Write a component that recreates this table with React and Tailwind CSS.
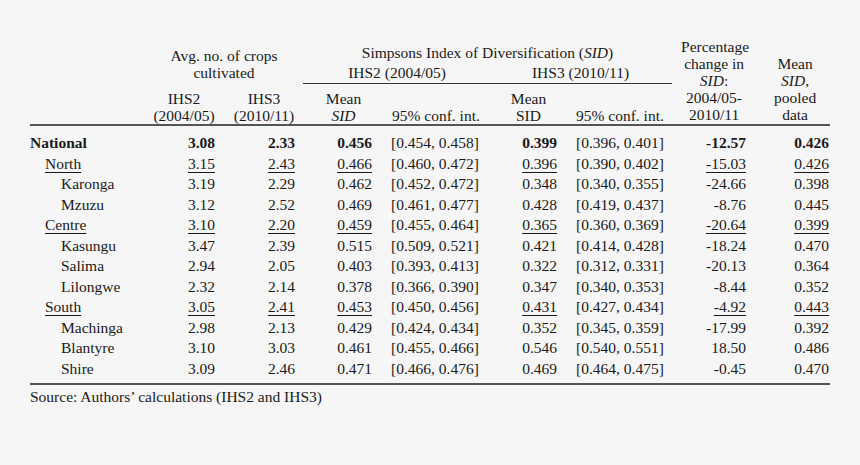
import React from 'react';

const rows = [
  { name: 'National', level: 0, bold: true, v: ['3.08', '2.33', '0.456', '[0.454, 0.458]', '0.399', '[0.396, 0.401]', '-12.57', '0.426'] },
  { name: 'North', level: 1, ul: true, v: ['3.15', '2.43', '0.466', '[0.460, 0.472]', '0.396', '[0.390, 0.402]', '-15.03', '0.426'] },
  { name: 'Karonga', level: 2, v: ['3.19', '2.29', '0.462', '[0.452, 0.472]', '0.348', '[0.340, 0.355]', '-24.66', '0.398'] },
  { name: 'Mzuzu', level: 2, v: ['3.12', '2.52', '0.469', '[0.461, 0.477]', '0.428', '[0.419, 0.437]', '-8.76', '0.445'] },
  { name: 'Centre', level: 1, ul: true, v: ['3.10', '2.20', '0.459', '[0.455, 0.464]', '0.365', '[0.360, 0.369]', '-20.64', '0.399'] },
  { name: 'Kasungu', level: 2, v: ['3.47', '2.39', '0.515', '[0.509, 0.521]', '0.421', '[0.414, 0.428]', '-18.24', '0.470'] },
  { name: 'Salima', level: 2, v: ['2.94', '2.05', '0.403', '[0.393, 0.413]', '0.322', '[0.312, 0.331]', '-20.13', '0.364'] },
  { name: 'Lilongwe', level: 2, v: ['2.32', '2.14', '0.378', '[0.366, 0.390]', '0.347', '[0.340, 0.353]', '-8.44', '0.352'] },
  { name: 'South', level: 1, ul: true, v: ['3.05', '2.41', '0.453', '[0.450, 0.456]', '0.431', '[0.427, 0.434]', '-4.92', '0.443'] },
  { name: 'Machinga', level: 2, v: ['2.98', '2.13', '0.429', '[0.424, 0.434]', '0.352', '[0.345, 0.359]', '-17.99', '0.392'] },
  { name: 'Blantyre', level: 2, v: ['3.10', '3.03', '0.461', '[0.455, 0.466]', '0.546', '[0.540, 0.551]', '18.50', '0.486'] },
  { name: 'Shire', level: 2, v: ['3.09', '2.46', '0.471', '[0.466, 0.476]', '0.469', '[0.464, 0.475]', '-0.45', '0.470'] },
];

// per column alignment for the data cells
const cellCls = [
  'text-right',
  'text-right',
  'text-right',
  'text-left pl-[19px]',
  'text-right',
  'text-left pl-[19px]',
  'text-right pr-[2px]',
  'text-right pr-[1px]',
];

const indent = ['pl-0', 'pl-[15px]', 'pl-[31px]'];

const isInterval = (i) => i === 3 || i === 5;

export default function App() {
  return (
    <div className="w-[860px] h-[465px] bg-[#f6f6f6] text-[#1a1a1a] font-['Liberation_Serif','Times_New_Roman',serif] text-[15.5px] leading-[17px] overflow-hidden">
      <div className="pt-[38px] pl-[30px]">
        <table className="table-fixed w-[800px] border-collapse whitespace-nowrap">
          <colgroup>
            <col className="w-[123px]" />
            <col className="w-[62px]" />
            <col className="w-[80px]" />
            <col className="w-[77px]" />
            <col className="w-[128px]" />
            <col className="w-[57px]" />
            <col className="w-[115px]" />
            <col className="w-[76px]" />
            <col className="w-[82px]" />
          </colgroup>
          <thead>
            <tr>
              <th rowSpan={3} className="p-0 border-b-2 border-[#555]" />
              <th colSpan={2} rowSpan={2} className="p-0 pb-[3px] font-normal text-center align-bottom">
                Avg. no. of crops
                <br />
                cultivated
              </th>
              <th colSpan={4} className="p-0 pl-[8px] pt-[5px] pb-[3px] font-normal text-center align-bottom">
                Simpsons Index of Diversification (<i>SID</i>)
              </th>
              <th rowSpan={3} className="p-0 pl-[9px] pr-[1px] pb-[1px] font-normal text-center align-bottom border-b-2 border-[#555]">
                Percentage
                <br />
                change in
                <br />
                <i>SID</i>:
                <br />
                2004/05-
                <br />
                2010/11
              </th>
              <th rowSpan={3} className="p-0 pl-[13px] pr-[1px] pb-[1px] font-normal text-center align-bottom border-b-2 border-[#555]">
                Mean
                <br />
                <i>SID</i>,
                <br />
                pooled
                <br />
                data
              </th>
            </tr>
            <tr>
              <th colSpan={4} className="p-0 font-normal align-bottom">
                <div className="ml-[8px] flex border-b border-[#333] pb-[2px]">
                  <span className="w-[188px] text-center">IHS2 (2004/05)</span>
                  <span className="flex-1 text-center pr-[2px]">IHS3 (2010/11)</span>
                </div>
              </th>
            </tr>
            <tr>
              <th className="p-0 pt-[5px] font-normal text-center align-bottom border-b-2 border-[#555]">
                IHS2
                <br />
                (2004/05)
              </th>
              <th className="p-0 pt-[5px] pl-[18px] font-normal text-center align-bottom border-b-2 border-[#555]">
                IHS3
                <br />
                (2010/11)
              </th>
              <th className="p-0 pt-[5px] pl-[20px] font-normal text-center align-bottom border-b-2 border-[#555]">
                Mean
                <br />
                <i>SID</i>
              </th>
              <th className="p-0 pt-[5px] pl-[20px] font-normal text-left align-bottom border-b-2 border-[#555]">
                95% conf. int.
              </th>
              <th className="p-0 pt-[5px] font-normal text-center align-bottom border-b-2 border-[#555]">
                Mean
                <br />
                SID
              </th>
              <th className="p-0 pt-[5px] pl-[19px] font-normal text-left align-bottom border-b-2 border-[#555]">
                95% conf. int.
              </th>
            </tr>
          </thead>
          <tbody className="leading-[20.5px]">
            {rows.map((r, ri) => {
              const first = ri === 0;
              const last = ri === rows.length - 1;
              const pad = first ? 'pt-[7px]' : last ? 'pb-[4px] border-b-2 border-[#555]' : '';
              return (
                <tr key={r.name}>
                  <td className={`p-0 ${indent[r.level]} ${pad} ${r.bold ? 'font-bold' : ''}`}>
                    <span className={r.ul ? 'underline underline-offset-[3px] decoration-1' : ''}>{r.name}</span>
                  </td>
                  {r.v.map((val, i) => (
                    <td key={i} className={`p-0 ${cellCls[i]} ${pad}`}>
                      <span
                        className={`${r.bold && !isInterval(i) ? 'font-bold' : ''} ${
                          r.ul && !isInterval(i) ? 'underline underline-offset-[3px] decoration-1' : ''
                        }`}
                      >
                        {val}
                      </span>
                    </td>
                  ))}
                </tr>
              );
            })}
          </tbody>
        </table>
        <p className="pt-[3px] leading-[17px]">Source: Authors’ calculations (IHS2 and IHS3)</p>
      </div>
    </div>
  );
}
